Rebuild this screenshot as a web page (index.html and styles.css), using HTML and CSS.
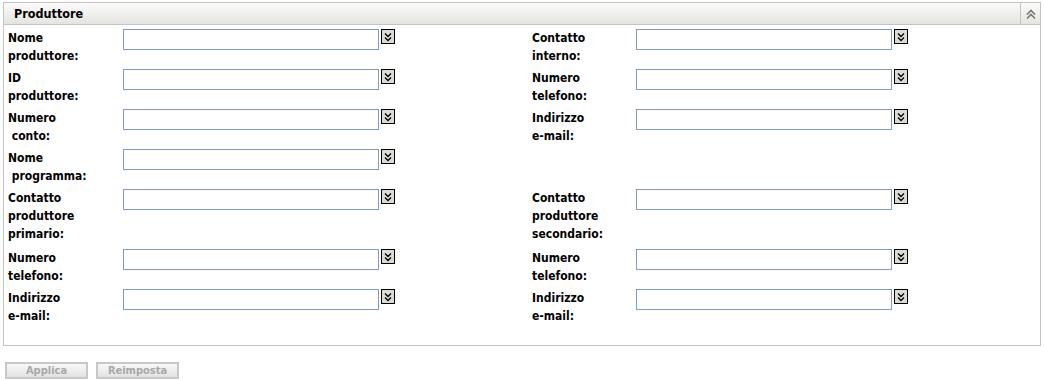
FILE: index.html
```html
<!DOCTYPE html>
<html lang="it">
<head>
	<meta charset="UTF-8">
	<title>Produttore</title>
	<link rel="stylesheet" href="styles.css">
</head>
<body>
	<div class="panel">
		<div class="panel-head">
			<span class="panel-title">Produttore</span>
			<span class="collapse">
				<svg width="12" height="12" viewBox="0 0 12 12"><path d="M2 6.5 L6 2.5 L10 6.5 M2 10.5 L6 6.5 L10 10.5" fill="none" stroke="#777" stroke-width="1.6"/></svg>
			</span>
		</div>
		<div class="panel-body">
			<div class="form">
				<label>Nome<br>produttore:</label>
				<div class="field"><input type="text"><span class="drop"></span></div>
				<label>Contatto<br>interno:</label>
				<div class="field"><input type="text"><span class="drop"></span></div>

				<label>ID<br>produttore:</label>
				<div class="field"><input type="text"><span class="drop"></span></div>
				<label>Numero<br>telefono:</label>
				<div class="field"><input type="text"><span class="drop"></span></div>

				<label>Numero<br>&nbsp;conto:</label>
				<div class="field"><input type="text"><span class="drop"></span></div>
				<label>Indirizzo<br>e-mail:</label>
				<div class="field"><input type="text"><span class="drop"></span></div>

				<label>Nome<br>&nbsp;programma:</label>
				<div class="field"><input type="text"><span class="drop"></span></div>
				<label></label>
				<div></div>

				<label class="tall">Contatto<br>produttore<br>primario:</label>
				<div class="field"><input type="text"><span class="drop"></span></div>
				<label class="tall">Contatto<br>produttore<br>secondario:</label>
				<div class="field"><input type="text"><span class="drop"></span></div>

				<label>Numero<br>telefono:</label>
				<div class="field"><input type="text"><span class="drop"></span></div>
				<label>Numero<br>telefono:</label>
				<div class="field"><input type="text"><span class="drop"></span></div>

				<label>Indirizzo<br>e-mail:</label>
				<div class="field"><input type="text"><span class="drop"></span></div>
				<label>Indirizzo<br>e-mail:</label>
				<div class="field"><input type="text"><span class="drop"></span></div>
			</div>
		</div>
	</div>
	<div class="buttons">
		<button disabled>Applica</button>
		<button disabled>Reimposta</button>
	</div>
</body>
</html>
```

FILE: styles.css
```css
*{margin: 0;padding: 0;box-sizing: border-box;}
body{font-family: "DejaVu Sans Condensed", "DejaVu Sans", sans-serif;font-size: 12px;font-weight: bold;color: #000;background: #fff;}
.panel{margin: 2px 0 0 3px;width: 1038px;border: 1px solid #c4c4c4;}
.panel-head{height: 22px;display: flex;align-items: center;background: linear-gradient(#fbfbfb, #e4e4e0);border-bottom: 1px solid #c4c4c4;}
.panel-title{flex: 1;padding-left: 10px;font-size: 12.5px;}
.collapse{width: 20px;height: 21px;border-left: 1px solid #c4c4c4;display: flex;align-items: center;justify-content: center;}
.panel-body{padding: 4px 0 16px 4px;}
.form{display: grid;grid-template-columns: 115px 409px 104px 1fr;}
.form label{line-height: 18px;min-height: 40px;padding-bottom: 4px;}
.form label.tall{padding-bottom: 6px;}
.field{display: flex;align-items: flex-start;}
.field input{width: 256px;height: 21px;border: 1px solid #7f9db9;background: #fff;}
.drop{width: 14px;height: 15px;margin: 0 0 0 2px;border: 1px solid #000;background: #dcdcd6 url("data:image/svg+xml,%3Csvg xmlns='http://www.w3.org/2000/svg' width='12' height='13'%3E%3Cpath d='M3 3.5 L6 6.5 L9 3.5 M3 7.5 L6 10.5 L9 7.5' fill='none' stroke='%23000' stroke-width='1.3'/%3E%3C/svg%3E") no-repeat center;}
.buttons{display: flex;gap: 8px;margin: 16px 0 0 5px;}
.buttons button{width: 83px;height: 17px;font-family: "DejaVu Sans Condensed", "DejaVu Sans", sans-serif;font-weight: bold;font-size: 11px;color: #a8a8a8;border: 2px solid #c8c8c8;background: linear-gradient(#f8f8f8, #e2e2e2);}
```
